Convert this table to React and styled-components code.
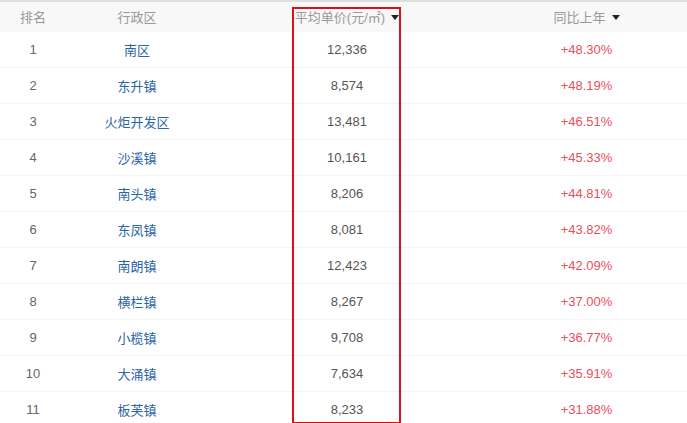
import React from "react";
import styled, { createGlobalStyle } from "styled-components";

const GlobalStyle = createGlobalStyle`
  body {
    margin: 0;
    background: #fff;
    font-family: "Liberation Sans", "Noto Sans CJK SC", sans-serif;
  }
`;

const Table = styled.div`
  position: relative;
  width: 687px;
  height: 423px;
  overflow: hidden;
  border-top: 2px solid #dedede;
  box-sizing: border-box;
`;

const Row = styled.div`
  display: grid;
  grid-template-columns: 66px 142px 278px 1fr;
  align-items: center;
  height: ${(p) => (p.$head ? "30px" : "36px")};
  background: ${(p) => (p.$head ? "#f8f8f8" : "#fff")};
  border-bottom: 1px solid ${(p) => (p.$head ? "#f8f8f8" : "#f3f3f3")};
  box-sizing: border-box;
  font-size: 13px;
`;

const Cell = styled.div`
  text-align: center;
  white-space: nowrap;
  color: ${(p) => p.$color || "#666"};
`;

const HeadCell = styled(Cell)`
  color: #999;
  display: flex;
  justify-content: center;
  align-items: center;
  gap: 6px;
`;

const Caret = styled.span`
  width: 0;
  height: 0;
  border-left: 4px solid transparent;
  border-right: 4px solid transparent;
  border-top: 5px solid #222;
  margin-top: 1px;
`;

const Highlight = styled.div`
  position: absolute;
  left: 292px;
  top: 5px;
  width: 109px;
  height: 417px;
  border: 2px solid #d9111b;
  box-sizing: border-box;
  pointer-events: none;
`;

const rows = [
  ["1", "南区", "12,336", "+48.30%"],
  ["2", "东升镇", "8,574", "+48.19%"],
  ["3", "火炬开发区", "13,481", "+46.51%"],
  ["4", "沙溪镇", "10,161", "+45.33%"],
  ["5", "南头镇", "8,206", "+44.81%"],
  ["6", "东凤镇", "8,081", "+43.82%"],
  ["7", "南朗镇", "12,423", "+42.09%"],
  ["8", "横栏镇", "8,267", "+37.00%"],
  ["9", "小榄镇", "9,708", "+36.77%"],
  ["10", "大涌镇", "7,634", "+35.91%"],
  ["11", "板芙镇", "8,233", "+31.88%"],
];

export default function App() {
  return (
    <>
      <GlobalStyle />
      <Table>
        <Row $head>
          <HeadCell>排名</HeadCell>
          <HeadCell>行政区</HeadCell>
          <HeadCell>
            平均单价(元/㎡)
            <Caret />
          </HeadCell>
          <HeadCell>
            同比上年
            <Caret />
          </HeadCell>
        </Row>
        {rows.map(([rank, name, price, yoy]) => (
          <Row key={rank}>
            <Cell>{rank}</Cell>
            <Cell $color="#2b66a6">{name}</Cell>
            <Cell $color="#555">{price}</Cell>
            <Cell $color="#e8505e">{yoy}</Cell>
          </Row>
        ))}
        <Highlight />
      </Table>
    </>
  );
}
